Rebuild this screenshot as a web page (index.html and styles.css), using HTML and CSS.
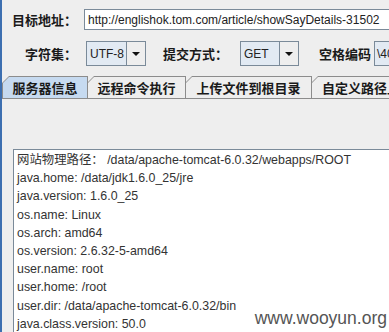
FILE: index.html
```html
<!DOCTYPE html>
<html>
<head>
<meta charset="utf-8">
<link rel="stylesheet" href="styles.css">
</head>
<body>
<div class="frame">
  <div class="row row1">
    <div class="label">目标地址：</div>
    <div class="field url">http://englishok.tom.com/article/showSayDetails-31502</div>
  </div>
  <div class="row row2">
    <div class="label">字符集：</div>
    <div class="combo c-utf"><span class="combo-text">UTF-8</span><span class="combo-btn"><i class="tri"></i></span></div>
    <div class="label2 l-method">提交方式：</div>
    <div class="combo c-get"><span class="combo-text">GET</span><span class="combo-btn"><i class="tri"></i></span></div>
    <div class="label2 l-space">空格编码</div>
    <div class="field enc">\40</div>
  </div>
  <div class="tabs">
    <div class="tab sel t1"><span class="tab-in">服务器信息</span></div>
    <div class="tab t2"><span class="tab-in">远程命令执行</span></div>
    <div class="tab t3"><span class="tab-in">上传文件到根目录</span></div>
    <div class="tab t4"><span class="tab-in">自定义路径上传</span></div>
  </div>
  <div class="tabline"></div>
  <div class="panel">
    <div class="output">
      <div class="line">网站物理路径： /data/apache-tomcat-6.0.32/webapps/ROOT</div>
      <div class="line">java.home: /data/jdk1.6.0_25/jre</div>
      <div class="line">java.version: 1.6.0_25</div>
      <div class="line">os.name: Linux</div>
      <div class="line">os.arch: amd64</div>
      <div class="line">os.version: 2.6.32-5-amd64</div>
      <div class="line">user.name: root</div>
      <div class="line">user.home: /root</div>
      <div class="line">user.dir: /data/apache-tomcat-6.0.32/bin</div>
      <div class="line">java.class.version: 50.0</div>
    </div>
  </div>
  <div class="watermark">www.wooyun.org</div>
</div>
</body>
</html>
```

FILE: styles.css
```css
html, body {
  margin: 0;
  padding: 0;
  background: #eeeeee;
}
body {
  width: 389px;
  height: 332px;
  overflow: hidden;
  position: relative;
}
.frame {
  width: 387px;
  height: 332px;
  border-left: 2px solid #3d6fb0;
  display: flex;
  flex-direction: column;
  position: relative;
  overflow: hidden;
}
.row {
  display: flex;
  align-items: center;
  padding-left: 10px;
  white-space: nowrap;
}
.row1 {
  margin-top: 9px;
  height: 21px;
}
.row2 {
  margin-top: 11px;
  height: 25px;
}
.label, .label2 {
  font-family: "Noto Sans CJK SC", sans-serif;
  font-weight: bold;
  font-size: 13px;
  color: #1a1a1a;
  flex-shrink: 0;
}
.label {
  width: 65px;
  padding-right: 7px;
  text-align: right;
}
.field {
  box-sizing: border-box;
  height: 100%;
  border: 1px solid #7a8a99;
  background: #ffffff;
  font-family: "Liberation Sans", Arial, sans-serif;
  font-size: 12px;
  color: #222;
  display: flex;
  align-items: center;
  padding-left: 3px;
  flex-shrink: 0;
}
.url {
  width: 340px;
}
.combo {
  display: flex;
  height: 100%;
  flex-shrink: 0;
}
.c-utf { margin-left: 2px; }
.c-get { margin-left: 12px; }
.combo-text {
  box-sizing: border-box;
  border: 1px solid #7a8a99;
  background: #e2eaf3;
  font-family: "Liberation Sans", Arial, sans-serif;
  font-size: 12px;
  color: #222;
  display: flex;
  align-items: center;
  padding-left: 3px;
  width: 41px;
}
.c-get .combo-text { width: 40px; }
.combo-btn {
  box-sizing: border-box;
  width: 19px;
  border: 1px solid #7a8a99;
  border-left: none;
  background: #eeeeee;
  display: flex;
  align-items: center;
  justify-content: center;
}
.tri {
  width: 0;
  height: 0;
  border-left: 4px solid transparent;
  border-right: 4px solid transparent;
  border-top: 4px solid #111;
}
.l-method { margin-left: 17px; }
.l-space { margin-left: 20px; }
.enc {
  margin-left: 3px;
  width: 40px;
  background: #e2eaf3;
  padding-left: 2px;
}
.tabs {
  margin-top: 10px;
  height: 22px;
  display: flex;
  white-space: nowrap;
  flex-shrink: 0;
}
.tab {
  box-sizing: border-box;
  height: 22px;
  background: #8c8c8c;
  padding: 1px 1px 0 1px;
  clip-path: polygon(0 7px, 7px 0, 100% 0, 100% 100%, 0 100%);
  flex-shrink: 0;
}
.tab + .tab { margin-left: -1px; }
.tab-in {
  display: flex;
  align-items: center;
  justify-content: center;
  height: 100%;
  background: #eeeeee;
  clip-path: polygon(0 6px, 6px 0, 100% 0, 100% 100%, 0 100%);
  font-family: "Noto Sans CJK SC", sans-serif;
  font-weight: bold;
  font-size: 13px;
  color: #1a1a1a;
}
.tab.sel .tab-in { background: #c6daf0; }
.t1 { width: 86px; }
.t2 { width: 99px; }
.t3 { width: 127px; }
.t4 { width: 110px; }
.t4 .tab-in { justify-content: flex-start; padding-left: 10px; }
.tabline {
  height: 1px;
  background: #8c8c8c;
  flex-shrink: 0;
}
.panel {
  flex: 1;
  padding: 50px 0 0 11px;
  overflow: hidden;
}
.output {
  box-sizing: border-box;
  width: 420px;
  height: 200px;
  background: #ffffff;
  border: 1px solid #7a8a99;
  padding: 1px 0 0 3px;
  font-family: "Liberation Sans", Arial, "Noto Sans CJK SC", sans-serif;
  font-size: 12.4px;
  color: #333;
}
.line {
  height: 18.2px;
  line-height: 18.2px;
  white-space: nowrap;
}
.watermark {
  position: absolute;
  right: 2px;
  bottom: 3px;
  font-family: "Liberation Sans", Arial, sans-serif;
  font-size: 17.5px;
  color: #555;
  text-shadow: 0 0 2px #fff, 0 0 3px #fff;
}
```
